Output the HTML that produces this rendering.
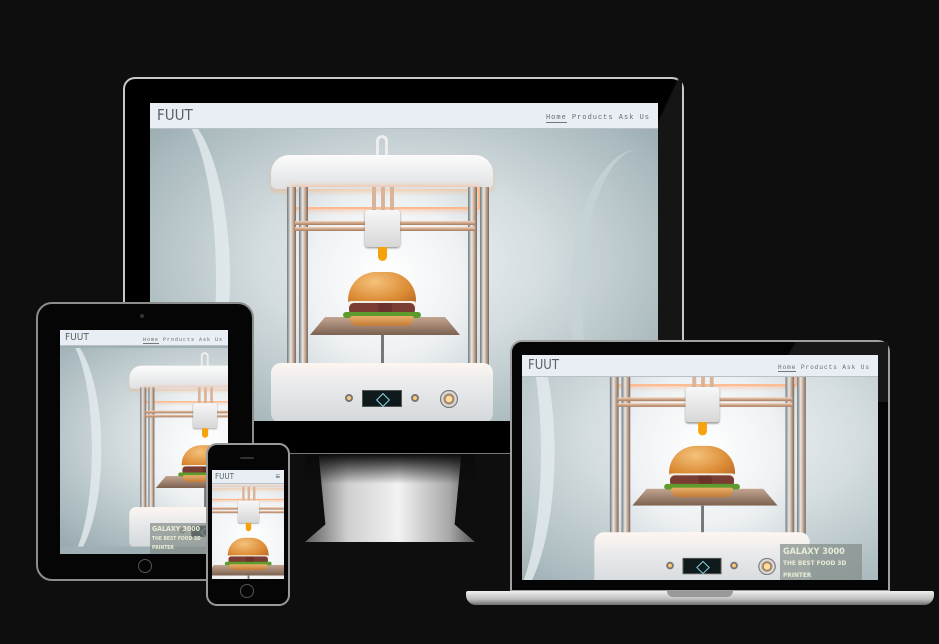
<!DOCTYPE html>
<html><head><meta charset="utf-8"><style>
*{margin:0;padding:0;box-sizing:border-box}
body{width:939px;height:644px;background:#0f0e0f;position:relative;overflow:hidden;font-family:"Liberation Sans",sans-serif}
.a{position:absolute}
.sc{position:absolute;left:0;top:0;width:508px;height:292px;transform-origin:0 0;background:radial-gradient(ellipse at 50% 45%,#f2f5f6 0%,#d3dcdf 40%,#a9b9bd 80%,#93a6ab 100%);overflow:hidden}
.sc div{position:absolute}
.sc .cl{left:-40px;top:-20px;width:120px;height:340px;border-radius:50%;border-right:14px solid #e4ecee;opacity:.8}
.sc .cr{left:420px;top:20px;width:140px;height:300px;border-radius:50%;border-left:12px solid #c7d4d7;opacity:.8}
.sc .back{left:140px;top:55px;width:190px;height:185px;background:radial-gradient(ellipse at 50% 50%,#fff 0%,#eef1f3 60%,#cfd8dc 100%)}
.sc .cap{left:121px;top:26px;width:222px;height:34px;border-radius:18px 18px 6px 6px;background:linear-gradient(#fbfbfb,#dfe1e3);box-shadow:0 3px 5px rgba(255,170,100,.45)}
.sc .tube{left:226px;top:6px;width:12px;height:22px;border:3px solid #eee;border-bottom:none;border-radius:6px 6px 0 0}
.sc .glow{left:140px;top:58px;width:190px;height:22px;border:2px solid #ffb98a;border-top:none;box-shadow:0 0 6px #ffb080}
.sc .p{top:58px;width:9px;height:180px;background:linear-gradient(90deg,#6f7779,#e8e8e8 40%,#c9a58a 70%,#6c6a6a)}
.sc .r{left:145px;width:180px;height:4px;background:linear-gradient(#f4d2b8,#a67b5d)}
.sc .v{top:58px;width:4px;height:30px;background:#d9b49a}
.sc .ext{left:215px;top:81px;width:35px;height:37px;background:linear-gradient(#f7f7f7,#d7d7d7);border-radius:3px;box-shadow:0 1px 2px #888}
.sc .drip{left:228px;top:118px;width:9px;height:14px;background:#f5a20c;border-radius:0 0 5px 5px}
.sc .bed{left:160px;top:188px;width:150px;height:18px;background:linear-gradient(#c3a691,#7c6150);clip-path:polygon(10% 0,90% 0,100% 100%,0 100%)}
.sc .rod{left:231px;top:206px;width:3px;height:28px;background:#777}
.sc .bt{left:198px;top:143px;width:68px;height:33px;border-radius:34px 34px 6px 6px;background:radial-gradient(ellipse at 40% 30%,#f4c27a,#dc8b35 60%,#b36422)}
.sc .ch{left:198px;top:172px;width:68px;height:8px;background:#f3eee2;border-radius:3px}
.sc .pt{left:199px;top:174px;width:66px;height:12px;background:radial-gradient(circle at 20% 50%,#7b3d33 30%,transparent 32%),radial-gradient(circle at 50% 50%,#6b322b 30%,transparent 32%),radial-gradient(circle at 80% 50%,#7b3d33 30%,transparent 32%),#5e2f27;border-radius:5px}
.sc .le{left:193px;top:183px;width:78px;height:6px;background:#5c9b2c;border-radius:4px}
.sc .bb{left:200px;top:187px;width:64px;height:10px;background:linear-gradient(#e9b06b,#c17a36);border-radius:3px 3px 10px 10px}
.sc .base{left:121px;top:234px;width:222px;height:60px;border-radius:10px;background:linear-gradient(#fdf6f1,#e8e9eb 40%,#d4d8db)}
.sc .lcd{left:212px;top:261px;width:40px;height:17px;background:#0e1a1c;border:1px solid #555}
.sc .lcd:after{content:"";position:absolute;left:15px;top:4px;width:8px;height:8px;transform:rotate(45deg);border:1px solid #8cd8ef}
.sc .b1{width:8px;height:8px;border-radius:50%;background:#ffca70;border:2px solid #777;top:265px}
.sc .kn{left:290px;top:261px;width:18px;height:18px;border-radius:50%;background:radial-gradient(#ffdc9a 25%,#8b6a50 30%,#eee 55%,#555 70%)}
.nav{position:absolute;background:#e9eef4;border-bottom:1px solid #b9c0c6;color:#5c6063}
.nav .lg{position:absolute;font-family:"DejaVu Sans Condensed","Liberation Sans",sans-serif;letter-spacing:0}
.nav .ln{position:absolute;font-family:"Liberation Mono",monospace;color:#656a6e;letter-spacing:1px}
.nav .ln u{text-decoration:none;border-bottom:1px solid #777}
.cap2{position:absolute;background:rgba(130,140,135,.7);color:#e9ecd6;font-family:"DejaVu Sans Condensed",sans-serif;font-weight:bold;line-height:1.25}
</style></head><body>

<!-- DESKTOP -->
<div class="a" style="left:123px;top:77px;width:561px;height:377px;background:#000;border:2px solid #c9c9c9;border-radius:12px 12px 0 0;border-bottom:1px solid #777"></div>
<div class="a" style="left:600px;top:79px;width:82px;height:373px;background:linear-gradient(115deg,transparent 30%,#151515 31%);"></div>
<div class="a" style="left:305px;top:454px;width:170px;height:88px;background:linear-gradient(90deg,#5c5c5c,#cfcfcf 25%,#f2f2f2 55%,#a8a8a8 85%,#555);clip-path:polygon(8% 0,92% 0,88% 80%,100% 100%,0 100%,12% 80%)"></div>
<div class="a" style="left:305px;top:454px;width:170px;height:30px;background:linear-gradient(#0a0a0a,transparent)"></div>
<div class="a" style="left:150px;top:103px;width:508px;height:318px;overflow:hidden;background:#9fb0b4">
 <div class="sc" style="top:26px">
  <div class="cl"></div><div class="cr"></div><div class="back"></div><div class="tube"></div><div class="cap"></div><div class="glow"></div>
  <div class="p" style="left:137px"></div><div class="p" style="left:149px"></div><div class="p" style="left:318px"></div><div class="p" style="left:330px"></div>
  <div class="r" style="top:92px"></div><div class="r" style="top:98px"></div><div class="v" style="left:222px"></div><div class="v" style="left:231px"></div><div class="v" style="left:240px"></div>
  <div class="ext"></div><div class="drip"></div><div class="rod"></div><div class="bed"></div>
  <div class="bt"></div><div class="ch"></div><div class="pt"></div><div class="le"></div><div class="bb"></div>
  <div class="base"></div><div class="lcd"></div><div class="b1" style="left:195px"></div><div class="b1" style="left:261px"></div><div class="kn"></div>
 </div>
 <div class="nav" style="left:0;top:0;width:508px;height:26px"><span class="lg" style="left:7px;top:3px;font-size:15px">FUUT</span><span class="ln" style="right:8px;top:11px;font-size:7px"><u>Home</u> Products Ask Us</span></div>
</div>

<!-- TABLET -->
<div class="a" style="left:36px;top:302px;width:218px;height:279px;background:#050505;border:2px solid #8d8d8d;border-radius:16px"></div>
<div class="a" style="left:140px;top:314px;width:4px;height:4px;border-radius:50%;background:#333"></div>
<div class="a" style="left:138px;top:559px;width:14px;height:14px;border-radius:50%;border:1px solid #555"></div>
<div class="a" style="left:60px;top:330px;width:168px;height:224px;overflow:hidden;background:#9fb0b4">
 <div class="sc" style="transform:scale(.68);left:-13px;top:18px">
  <div class="cl"></div><div class="cr"></div><div class="back"></div><div class="tube"></div><div class="cap"></div><div class="glow"></div>
  <div class="p" style="left:137px"></div><div class="p" style="left:149px"></div><div class="p" style="left:318px"></div><div class="p" style="left:330px"></div>
  <div class="r" style="top:92px"></div><div class="r" style="top:98px"></div><div class="v" style="left:222px"></div><div class="v" style="left:231px"></div><div class="v" style="left:240px"></div>
  <div class="ext"></div><div class="drip"></div><div class="rod"></div><div class="bed"></div>
  <div class="bt"></div><div class="ch"></div><div class="pt"></div><div class="le"></div><div class="bb"></div>
  <div class="base"></div><div class="lcd"></div><div class="b1" style="left:195px"></div><div class="b1" style="left:261px"></div><div class="kn"></div>
 </div>
 <div class="nav" style="left:0;top:0;width:168px;height:16px"><span class="lg" style="left:5px;top:2px;font-size:10px">FUUT</span><span class="ln" style="right:5px;top:7px;font-size:5px"><u>Home</u> Products Ask Us</span></div>
 <div class="cap2" style="left:90px;top:193px;width:56px;height:31px;font-size:7px;padding:2px">GALAXY 3000<br><span style="font-size:5px">THE BEST FOOD 3D PRINTER</span></div>
</div>

<!-- PHONE -->
<div class="a" style="left:206px;top:443px;width:84px;height:163px;background:#050505;border:2px solid #9a9a9a;border-radius:11px"></div>
<div class="a" style="left:240px;top:457px;width:14px;height:2px;background:#333;border-radius:1px"></div>
<div class="a" style="left:240px;top:584px;width:14px;height:14px;border-radius:50%;border:1px solid #555"></div>
<div class="a" style="left:212px;top:470px;width:72px;height:109px;overflow:hidden;background:#f0f0f0">
 <div class="sc" style="transform:scale(.6);left:-103px;top:-18px">
  <div class="cl"></div><div class="cr"></div><div class="back"></div><div class="tube"></div><div class="cap"></div><div class="glow"></div>
  <div class="p" style="left:137px"></div><div class="p" style="left:149px"></div><div class="p" style="left:318px"></div><div class="p" style="left:330px"></div>
  <div class="r" style="top:92px"></div><div class="r" style="top:98px"></div><div class="v" style="left:222px"></div><div class="v" style="left:231px"></div><div class="v" style="left:240px"></div>
  <div class="ext"></div><div class="drip"></div><div class="rod"></div><div class="bed"></div>
  <div class="bt"></div><div class="ch"></div><div class="pt"></div><div class="le"></div><div class="bb"></div>
  <div class="base"></div><div class="lcd"></div><div class="b1" style="left:195px"></div><div class="b1" style="left:261px"></div><div class="kn"></div>
 </div>
 <div class="nav" style="left:0;top:0;width:72px;height:14px"><span class="lg" style="left:3px;top:2px;font-size:8px">FUUT</span><span style="position:absolute;right:4px;top:3px;font-size:8px;color:#555;line-height:8px">≡</span></div>
</div>

<!-- LAPTOP -->
<div class="a" style="left:510px;top:340px;width:380px;height:252px;background:#050505;border:2px solid #a0a0a0;border-radius:12px 12px 0 0"></div>
<div class="a" style="left:740px;top:342px;width:148px;height:60px;background:linear-gradient(120deg,transparent 30%,#181818 31%)"></div>
<div class="a" style="left:466px;top:591px;width:468px;height:14px;background:linear-gradient(#f0f0f0,#bcbcbc 60%,#6e6e6e);border-radius:2px 2px 10px 10px"></div>
<div class="a" style="left:667px;top:591px;width:66px;height:6px;background:#999;border-radius:0 0 6px 6px"></div>
<div class="a" style="left:522px;top:355px;width:356px;height:225px;overflow:hidden;background:#9fb0b4">
 <div class="sc" style="transform:scale(.97,.95);left:-45px;top:-45px">
  <div class="cl"></div><div class="cr"></div><div class="back"></div><div class="tube"></div><div class="cap"></div><div class="glow"></div>
  <div class="p" style="left:137px"></div><div class="p" style="left:149px"></div><div class="p" style="left:318px"></div><div class="p" style="left:330px"></div>
  <div class="r" style="top:92px"></div><div class="r" style="top:98px"></div><div class="v" style="left:222px"></div><div class="v" style="left:231px"></div><div class="v" style="left:240px"></div>
  <div class="ext"></div><div class="drip"></div><div class="rod"></div><div class="bed"></div>
  <div class="bt"></div><div class="ch"></div><div class="pt"></div><div class="le"></div><div class="bb"></div>
  <div class="base"></div><div class="lcd"></div><div class="b1" style="left:195px"></div><div class="b1" style="left:261px"></div><div class="kn"></div>
 </div>
 <div class="nav" style="left:0;top:0;width:356px;height:22px"><span class="lg" style="left:6px;top:3px;font-size:13px">FUUT</span><span class="ln" style="right:8px;top:9px;font-size:6px"><u>Home</u> Products Ask Us</span></div>
 <div class="cap2" style="left:258px;top:189px;width:82px;height:36px;font-size:9px;padding:3px 3px">GALAXY 3000<br><span style="font-size:6.5px">THE BEST FOOD 3D<br>PRINTER</span></div>
</div>
</body></html>
